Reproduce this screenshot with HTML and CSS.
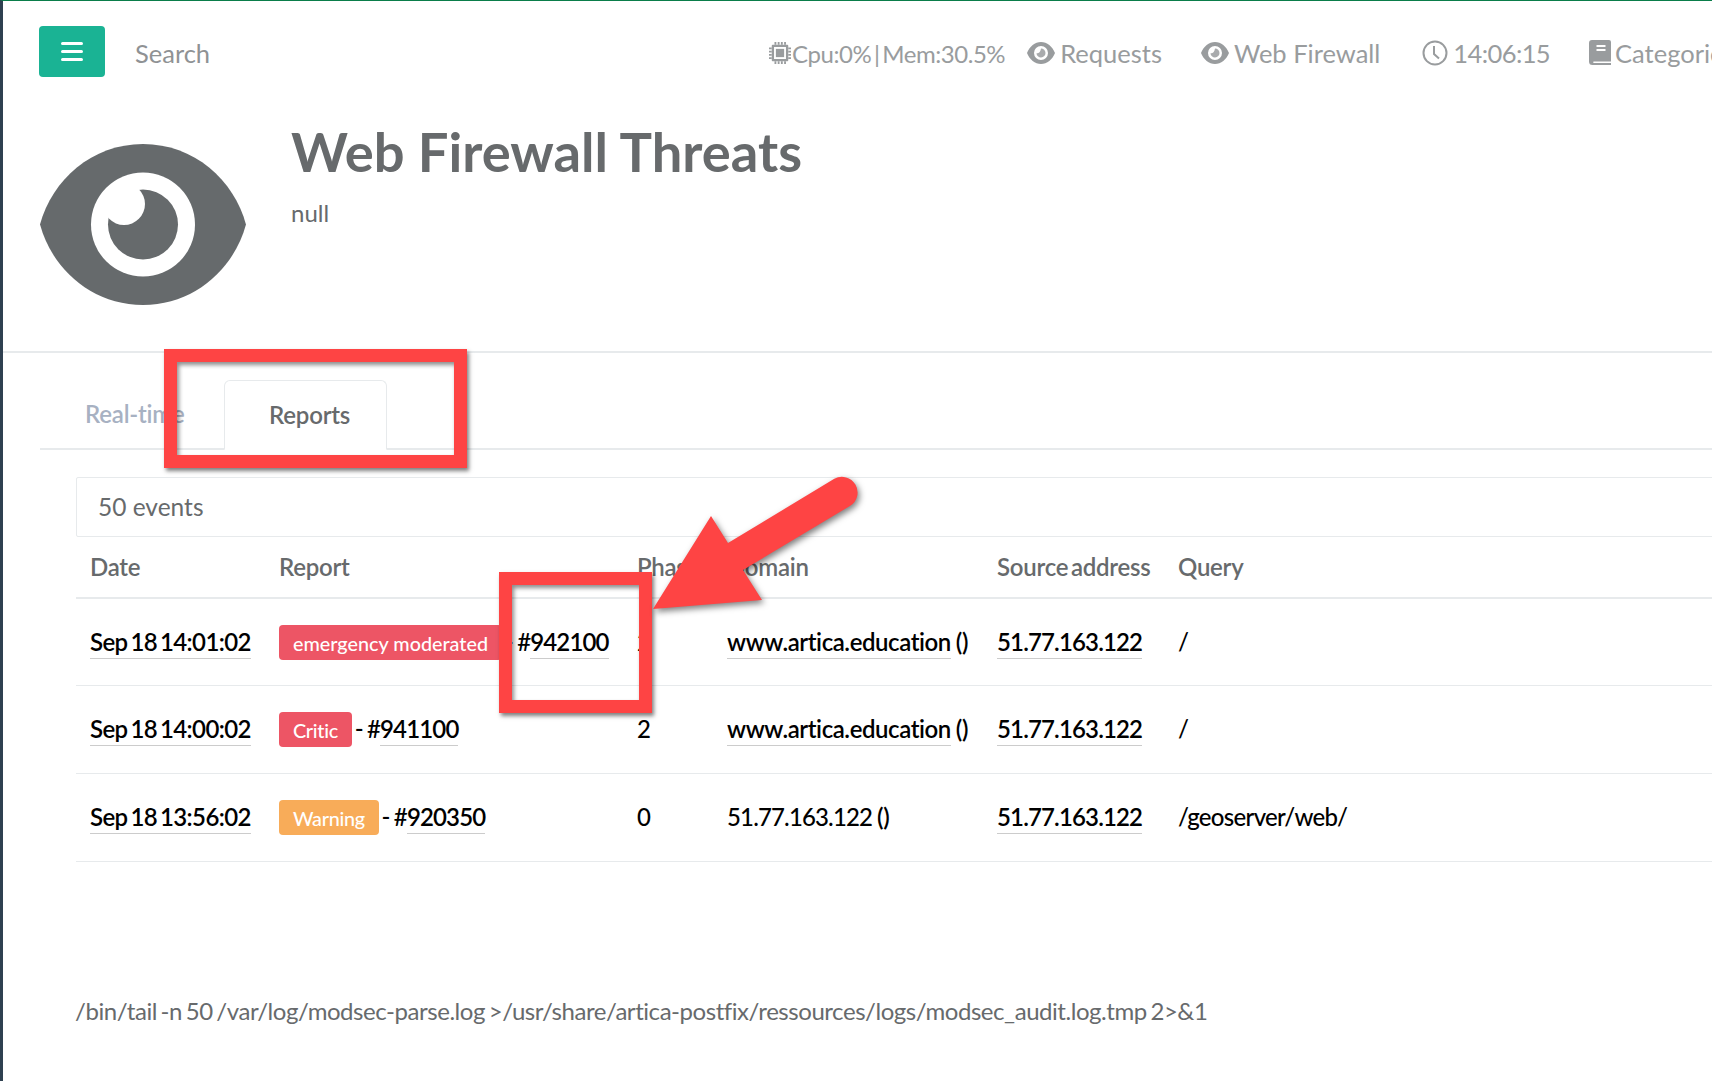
FILE: index.html
```html
<!DOCTYPE html>
<html lang="en">
<head>
<meta charset="utf-8">
<title>Web Firewall Threats</title>
<link rel="stylesheet" href="styles.css">
</head>
<body>
<div class="page">
  <header class="topbar">
    <button class="menu-btn" aria-label="Menu">
      <svg class="menu-icon" viewBox="0 0 22 19"><path d="M1.500 1.500h19M1.500 9.500h19M1.500 17.500h19"/></svg>
    </button>
    <span class="search">Search</span>
    <nav class="topnav">
      <span class="nav-item nav-cpu">
        <svg class="ico ico-chip" viewBox="0 0 24 24"><path d="M6 0h2v3H6zM9.500 0h2v3h-2zM13 0h2v3h-2zM16.500 0h2v3h-2zM6 21h2v3H6zM9.500 21h2v3h-2zM13 21h2v3h-2zM16.500 21h2v3h-2zM0 6h3v2H0zM0 9.500h3v2H0zM0 13h3v2H0zM0 16.500h3v2H0zM21 6h3v2h-3zM21 9.500h3v2h-3zM21 13h3v2h-3zM21 16.500h3v2h-3z"/><path fill-rule="evenodd" d="M3 4a1 1 0 0 1 1-1h16a1 1 0 0 1 1 1v16a1 1 0 0 1-1 1H4a1 1 0 0 1-1-1zM5.500 5.500v13h13v-13z"/><rect x="7.500" y="7.500" width="9" height="9"/></svg>
        <span class="cpu-text">Cpu:0% | Mem:30.5%</span>
      </span>
      <span class="nav-item nav-req">
        <svg class="ico ico-eye" viewBox="0 0 28 22"><path fill-rule="evenodd" d="M0 11C2.500 4.500 8 0 14 0s11.500 4.500 14 11c-2.500 6.500-8 11-14 11S2.500 17.500 0 11zm14-7a7 7 0 1 0 0 14 7 7 0 0 0 0-14z"/><path class="eye-pupil" d="M14 6.500a4.500 4.500 0 1 1-4.500 4.700c1.500.6 3.900-.4 4.500-4.700z"/></svg>
        <span>Requests</span>
      </span>
      <span class="nav-item nav-waf">
        <svg class="ico ico-eye" viewBox="0 0 28 22"><path fill-rule="evenodd" d="M0 11C2.500 4.500 8 0 14 0s11.500 4.500 14 11c-2.500 6.500-8 11-14 11S2.500 17.500 0 11zm14-7a7 7 0 1 0 0 14 7 7 0 0 0 0-14z"/><path class="eye-pupil" d="M14 6.500a4.500 4.500 0 1 1-4.500 4.700c1.500.6 3.900-.4 4.500-4.700z"/></svg>
        <span>Web Firewall</span>
      </span>
      <span class="nav-item nav-clock">
        <svg class="ico ico-clock" viewBox="0 0 26 26"><circle class="clock-ring" cx="13" cy="13" r="11.500"/><path class="clock-hands" d="M12 6v8l5 4.500"/></svg>
        <span class="time">14:06:15</span>
      </span>
      <span class="nav-item nav-cat">
        <svg class="ico ico-book" viewBox="0 0 22 25"><path fill-rule="evenodd" d="M3 0h17a2 2 0 0 1 2 2v19.500H4.500a1.300 1.300 0 0 0 0 1.500H22v2H3.500A3.500 3.500 0 0 1 0 21.500V3a3 3 0 0 1 3-3zm4.500 5v2h9V5zm0 4v2h9V9z"/></svg>
        <span>Categories</span>
      </span>
    </nav>
  </header>

  <section class="heading">
    <svg class="hero-eye" viewBox="0 0 206 161">
      <path class="hero-outer" d="M0 80.500C12 36 52 0 103 0s91 36 103 80.500C194 125 154 161 103 161S12 125 0 80.500z"/>
      <circle class="hero-white" cx="103" cy="80.500" r="52"/>
      <circle class="hero-outer" cx="103" cy="80.500" r="35"/>
      <circle class="hero-white" cx="84" cy="60" r="21"/>
    </svg>
    <div class="heading-text">
      <h1>Web Firewall Threats</h1>
      <p>null</p>
    </div>
  </section>

  <main class="content">
    <div class="tabs">
      <a class="tab">Real-time</a>
      <a class="tab tab-active">Reports</a>
    </div>
    <div class="panel">
      <div class="count">50 events</div>
      <table class="events">
        <colgroup>
          <col class="c-date"><col class="c-report"><col class="c-phase"><col class="c-domain"><col class="c-source"><col class="c-query">
        </colgroup>
        <thead>
          <tr><th>Date</th><th>Report</th><th>Phase</th><th>Domain</th><th>Source address</th><th>Query</th></tr>
        </thead>
        <tbody>
          <tr>
            <td><a class="lnk date">Sep 18 14:01:02</a></td>
            <td><span class="badge badge-red badge-long">emergency moderated</span> <span class="num">- #<a class="lnk">942100</a></span></td>
            <td>2</td>
            <td><a class="lnk dom">www.artica.education</a> <span class="paren">()</span></td>
            <td><a class="lnk num">51.77.163.122</a></td>
            <td>/</td>
          </tr>
          <tr>
            <td><a class="lnk date">Sep 18 14:00:02</a></td>
            <td><span class="badge badge-red badge-short">Critic</span> <span class="num">- #<a class="lnk">941100</a></span></td>
            <td>2</td>
            <td><a class="lnk dom">www.artica.education</a> <span class="paren">()</span></td>
            <td><a class="lnk num">51.77.163.122</a></td>
            <td>/</td>
          </tr>
          <tr class="last">
            <td><a class="lnk date">Sep 18 13:56:02</a></td>
            <td><span class="badge badge-amber badge-short">Warning</span> <span class="num">- #<a class="lnk">920350</a></span></td>
            <td>0</td>
            <td><span class="num">51.77.163.122</span> <span class="paren">()</span></td>
            <td><a class="lnk num">51.77.163.122</a></td>
            <td class="path">/geoserver/web/</td>
          </tr>
        </tbody>
      </table>
      <p class="cmd">/bin/tail -n 50 /var/log/modsec-parse.log &gt;/usr/share/artica-postfix/ressources/logs/modsec_audit.log.tmp 2&gt;&amp;1</p>
    </div>
  </main>

  <div class="mark mark-tab"></div>
  <div class="mark mark-id"></div>
  <svg class="arrow" viewBox="0 0 1712 1081"><path d="M653 609L711 516L728 543L834.300 478.800A15.700 15.700 0 0 1 850.300 505.800L743 570L762 600Z"/></svg>
</div>
</body>
</html>
```
FILE: styles.css
```css
* { box-sizing: border-box; }
html, body { margin: 0; height: 100%; }
body {
  font-family: Lato, "Open Sans", sans-serif;
  color: #676a6c;
  background: #fff;
}
.page {
  position: relative;
  width: 1712px;
  height: 1081px;
  overflow: hidden;
  border-left: 3px solid #2f4050;
  border-top: 1px solid #0a7d4a;
}

/* top bar */
.topbar {
  display: flex;
  align-items: center;
  height: 76px;
  padding: 28px 0 0 36px;
  white-space: nowrap;
}
.menu-btn {
  width: 66px;
  height: 51px;
  margin-top: -3px;
  border: 0;
  padding: 0;
  border-radius: 4px;
  background: #1ab394;
  display: flex;
  align-items: center;
  justify-content: center;
}
.menu-icon { width: 22px; height: 19px; fill: none; stroke: #fff; stroke-width: 3; stroke-linecap: round; }
.search { margin-left: 30px; font-size: 25.5px; color: #8f9294; }
.topnav {
  display: flex;
  align-items: center;
  margin-left: auto;
  width: 943px;
  flex: none;
  font-size: 25.5px;
  color: #999c9e;
}
.nav-item { display: flex; align-items: center; gap: 5px; flex: none; }
.nav-cpu { gap: 1px; }
.cpu-text { font-size: 24px; word-spacing: -3px; letter-spacing: -.45px; }
.time { letter-spacing: -.6px; }
.nav-req { margin-left: 22px; }
.nav-waf { margin-left: 39px; }
.nav-clock { margin-left: 42px; }
.nav-cat { margin-left: 39px; gap: 4px; }
.ico { fill: #999c9e; flex: none; margin-top: -1px; }
.eye-pupil { fill: #a9abad; }
.ico-chip { width: 22px; height: 22px; }
.ico-eye { width: 28px; height: 22px; }
.ico-clock { width: 26px; height: 26px; }
.ico-book { width: 22px; height: 25px; }
.clock-ring, .clock-hands { fill: none; stroke: #999c9e; stroke-width: 2; }

/* heading */
.heading {
  display: flex;
  align-items: flex-start;
  height: 276px;
  padding-left: 37px;
  border-bottom: 2px solid #e7eaec;
}
.hero-eye { width: 206px; height: 161px; margin-top: 67px; flex: none; }
.hero-outer { fill: #666a6c; }
.hero-white { fill: #fff; }
.heading-text { margin-left: 45px; }
h1 { margin: 36px 0 0; font-size: 54.3px; line-height: 76px; font-weight: 700; color: #676a6c; }
.heading-text p { margin: 9px 0 0; font-size: 24px; line-height: 30px; }

/* tabs */
.content { padding: 0 0 0 37px; }
.tabs {
  display: flex;
  height: 70px;
  margin-top: 27px;
  border-bottom: 2px solid #e7eaec;
  font-size: 24px;
  font-weight: 600;
  letter-spacing: -.2px;
  white-space: nowrap;
}
.tab { padding: 0 45px; line-height: 68px; color: #a7b1c2; }
.tab:first-child { width: 184px; }
.tab-active {
  color: #676a6c;
  background: #fff;
  width: 163px;
  height: 70px;
  padding: 0 44px;
  border: 1px solid #e7eaec;
  border-bottom-color: #fff;
  border-radius: 6px 6px 0 0;
}

/* panel */
.panel { margin: 27px 0 0 36px; }
.count {
  width: 1660px;
  height: 60px;
  border: 1px solid #e7eaec;
  border-radius: 2px;
  padding-left: 21px;
  font-size: 24.5px;
  line-height: 58px;
}
.events {
  border-collapse: collapse;
  table-layout: fixed;
  width: 1636px;
  font-size: 24px;
  color: #000;
  word-spacing: -3px;
  letter-spacing: -.25px;
}
.c-date { width: 189px; }
.c-report { width: 358px; }
.c-phase { width: 90px; }
.c-domain { width: 270px; }
.c-source { width: 181px; }
.events th {
  height: 61px;
  padding: 0 14px 2px;
  text-align: left;
  font-weight: 600;
  color: #676a6c;
  border-bottom: 2px solid #e7eaec;
  white-space: nowrap;
  letter-spacing: -.25px;
}
.events td {
  height: 87.5px;
  padding: 0 14px 2px;
  border-bottom: 1px solid #e7eaec;
  white-space: nowrap;
  font-weight: 500;
}
.events .last td { height: 88.5px; }
.events .path { letter-spacing: -.7px; }
.lnk { border-bottom: 1px solid #ccc; padding-bottom: 2px; font-weight: 600; }
.num { letter-spacing: -.85px; word-spacing: -1px; }
.date { letter-spacing: -.6px; word-spacing: -2.5px; }
.dom { letter-spacing: -.42px; }
.paren { margin-left: 2px; font-weight: 600; }
.badge {
  display: inline-block;
  margin: -6px 0;
  padding: 0 12px 0 14px;
  height: 35px;
  line-height: 36px;
  border-radius: 4px;
  font-size: 19.8px;
  letter-spacing: 0;
  word-spacing: 0;
  color: #fff;
  vertical-align: 0;
}
.badge-long { padding-right: 14px; }
.badge-short { letter-spacing: -.3px; padding-right: 14px; }
.badge-red { background: #ed5565; }
.badge-amber { background: #f8ac59; }
.cmd { margin: 134px 0 0 -1px; font-size: 24px; line-height: 30px; word-spacing: -2px; letter-spacing: -.45px; }

/* annotations */
.mark {
  position: absolute;
  border: 13px solid #fe4444;
  box-shadow: 2px 3px 4px rgba(0,0,0,.5), inset 2px 3px 4px rgba(0,0,0,.45);
}
.mark-tab { left: 161px; top: 348px; width: 303px; height: 119px; }
.mark-id { left: 496px; top: 571px; width: 153px; height: 141px; }
.arrow {
  position: absolute;
  left: -3px;
  top: -1px;
  width: 1712px;
  height: 1081px;
  fill: #fe4444;
  filter: drop-shadow(2px 3px 3px rgba(0,0,0,.5));
  pointer-events: none;
}
```
